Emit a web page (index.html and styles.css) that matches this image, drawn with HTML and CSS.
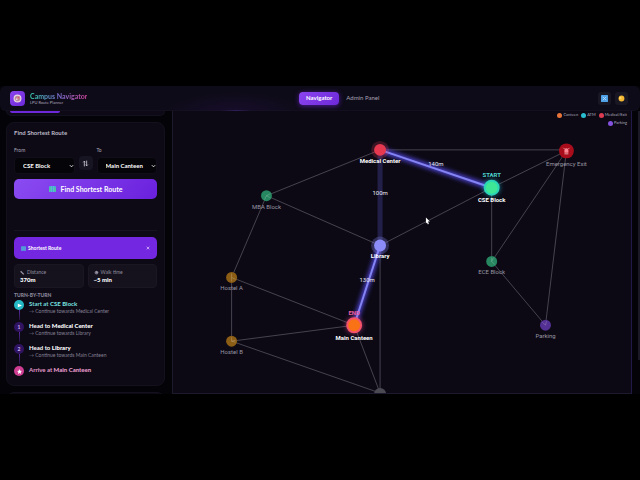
FILE: index.html
```html
<!DOCTYPE html>
<html lang="en">
<head>
  <meta charset="UTF-8">
  <meta name="viewport" content="width=device-width, initial-scale=1.0">
  <title>Campus Navigator</title>
  <link rel="stylesheet" href="styles.css">
</head>
<body>
  <div class="app">
    <header class="topbar">
      <div class="brand">
        <div class="brand-logo">
          <svg viewBox="0 0 16 16" width="9" height="9">
            <circle cx="8" cy="8" r="7" fill="#ead9e4"/>
            <circle cx="8" cy="8" r="5" fill="#b98a9c"/>
            <path d="M12 4 L9 9 L4 12 L7 7 Z" fill="#f5eef5"/>
            <path d="M12 4 L9 9 L7 7 Z" fill="#d5324f"/>
          </svg>
        </div>
        <div>
          <h1>Campus Navigator</h1>
          <p>LPU Route Planner</p>
        </div>
      </div>
      <nav>
        <a href="#navigator" class="active">Navigator</a>
        <a href="#admin">Admin Panel</a>
      </nav>
      <div class="tools">
        <button class="tool-btn" aria-label="Map">
          <svg viewBox="0 0 12 12" width="7" height="7">
            <rect width="12" height="12" rx="1" fill="#4d9fe6"/>
            <path d="M3 3 L9 9 M9 3 L3 9" stroke="#b5dcfb" stroke-width="1.5"/>
          </svg>
        </button>
        <button class="tool-btn" aria-label="Theme">
          <svg viewBox="0 0 12 12" width="7" height="7">
            <circle cx="6" cy="6" r="5" fill="#f5b731"/>
            <circle cx="4" cy="5" r="2" fill="#ffd968"/>
          </svg>
        </button>
      </div>
    </header>

    <main>
      <aside class="sidebar">
        <section class="card card-prev"><div class="prev-bar"></div></section>

        <section class="card route-card">
          <h2>Find Shortest Route</h2>
          <div class="route-form">
            <div class="field">
              <label for="from">From</label>
              <div class="select-wrap">
                <select id="from"><option>CSE Block</option><option>Library</option></select>
                <svg viewBox="0 0 6 4" width="5" height="4"><path d="M1 1 L3 3 L5 1" fill="none" stroke="#fff"/></svg>
              </div>
            </div>
            <button class="swap-btn" aria-label="Swap">
              <svg viewBox="0 0 12 12" width="7" height="7">
                <path d="M4 11 V2 M2 4 L4 2 L6 4 M8 1 V10 M6 8 L8 10 L10 8" fill="none" stroke="#cfcbdc" stroke-width="1.4"/>
              </svg>
            </button>
            <div class="field">
              <label for="to">To</label>
              <div class="select-wrap">
                <select id="to"><option>Main Canteen</option><option>Library</option></select>
                <svg viewBox="0 0 6 4" width="5" height="4"><path d="M1 1 L3 3 L5 1" fill="none" stroke="#fff"/></svg>
              </div>
            </div>
          </div>
          <button class="find-btn">
            <svg class="map-icon" viewBox="0 0 14 12" width="7" height="6">
              <rect width="14" height="12" rx="1" fill="#4aa5d8"/>
              <path d="M0 3 L5 1 V9 L0 12 Z M9 2 L14 4 V12 L9 10 Z" fill="#4cc3a5"/>
              <path d="M5 0 V12 M9 0 V12" stroke="#6fc0e2"/>
            </svg>
            Find Shortest Route
          </button>

          <div class="result">
            <div class="result-head">
              <svg class="map-icon" viewBox="0 0 14 12" width="5" height="5">
                <rect width="14" height="12" rx="1" fill="#4aa5d8"/>
                <path d="M0 3 L5 1 V9 L0 12 Z M9 2 L14 4 V12 L9 10 Z" fill="#5f8fd8"/>
              </svg>
              <span>Shortest Route</span>
              <button class="close-btn" aria-label="Close">
                <svg viewBox="0 0 6 6" width="4" height="4"><path d="M1 1 L5 5 M5 1 L1 5" stroke="#e9dcff"/></svg>
              </button>
            </div>
            <div class="stats">
              <div class="stat">
                <p>
                  <svg viewBox="0 0 8 8" width="5" height="5"><path d="M1 2 L6 7" stroke="#9a96a8" stroke-width="2"/></svg>
                  Distance
                </p>
                <strong>370m</strong>
              </div>
              <div class="stat">
                <p>
                  <svg viewBox="0 0 8 8" width="5" height="5"><circle cx="4" cy="4" r="3" fill="#777284"/><path d="M4 2 V4 H6" fill="none" stroke="#b5b1c2"/></svg>
                  Walk time
                </p>
                <strong>~5 min</strong>
              </div>
            </div>
            <h3>TURN-BY-TURN</h3>
            <ol class="steps">
              <li class="start">
                <span class="dot"><svg viewBox="0 0 6 6" width="5" height="5"><path d="M1 1 L6 3 L1 5 Z" fill="#fff"/></svg></span>
                <div><b>Start at <strong>CSE Block</strong></b><p>→ Continue towards Medical Center</p></div>
              </li>
              <li>
                <span class="dot">1</span>
                <div><b>Head to <strong>Medical Center</strong></b><p>→ Continue towards Library</p></div>
              </li>
              <li>
                <span class="dot">2</span>
                <div><b>Head to <strong>Library</strong></b><p>→ Continue towards Main Canteen</p></div>
              </li>
              <li class="end">
                <span class="dot"><svg viewBox="0 0 10 10" width="5" height="5"><path d="M5 0 L6.500 3.400 L10 3.800 L7.400 6.200 L8.100 10 L5 8 L1.900 10 L2.600 6.200 L0 3.800 L3.500 3.400 Z" fill="#fff"/></svg></span>
                <div><b>Arrive at <strong>Main Canteen</strong></b></div>
              </li>
            </ol>
          </div>
        </section>
        <section class="card card-next"></section>
      </aside>

      <section class="map">
        <ul class="legend">
          <li><i class="canteen"></i>Canteen</li>
          <li><i class="atm"></i>ATM</li>
          <li><i class="medical"></i>Medical/Exit</li>
          <li><i class="parking"></i>Parking</li>
        </ul>
        <svg class="graph" viewBox="172 111 460 283" preserveAspectRatio="xMidYMin slice">
          <defs>
            <filter id="glow" x="-50%" y="-50%" width="200%" height="200%">
              <feGaussianBlur stdDeviation="2"/>
            </filter>
          </defs>

          <!-- campus paths -->
          <g class="edges">
            <path d="M380 150 H567"/>
            <path d="M380 150 L266 196 L380 246 L492 188 L567 151"/>
            <path d="M266 196 L231 278 V342 L354 326 L231 278"/>
            <path d="M231 342 L380 394 L354 326"/>
            <path d="M380 246 V394"/>
            <path d="M492 188 V262 L546 326 L567 151 L492 262"/>
          </g>

          <!-- active route -->
          <path class="done" d="M380 150 V246"/>
          <g class="route-glow" filter="url(#glow)">
            <path d="M492 188 L380 150"/>
            <path d="M380 246 L354 326"/>
          </g>
          <g class="route">
            <path d="M492 188 L380 150"/>
            <path d="M380 246 L354 326"/>
          </g>

          <circle cx="380" cy="150" r="9" fill="#e63950" opacity=".22"/>
          <circle cx="380" cy="246" r="9" fill="#8b8cf8" opacity=".28"/>
          <circle cx="492" cy="188" r="9" fill="#22d3ee" filter="url(#glow)" opacity=".4"/>
          <circle cx="354" cy="326" r="9" fill="#ec4899" filter="url(#glow)" opacity=".4"/>
          <circle cx="380" cy="150" r="6" fill="#e63950"/>
          <circle cx="380" cy="246" r="6" fill="#8b8cf8"/>
          <circle cx="492" cy="188" r="7" fill="#3de795" stroke="#2bd5b7" stroke-width="2"/>
          <circle cx="354" cy="326" r="7" fill="#f97316" stroke="#f4526b" stroke-width="2"/>

          <circle cx="266" cy="196" r="5.500" fill="#268760"/>
          <circle cx="492" cy="262" r="5.500" fill="#268760"/>
          <circle cx="231" cy="278" r="5.500" fill="#8c5d14"/>
          <circle cx="231" cy="342" r="5.500" fill="#8c5d14"/>
          <circle cx="546" cy="326" r="5.500" fill="#533093"/>
          <circle cx="380" cy="395" r="6" fill="#4b4a53"/>
          <circle cx="567" cy="151" r="7.500" fill="#a90d1b"/>
          <g class="node-marks">
            <path d="M266 196 L270 194 M266 196 L270 198 M266 196 L264 200"/>
            <path d="M492 258 V262 L495 265 M492 262 L494 258"/>
            <path d="M231 274 V282 M231 278 L235 280"/>
            <path d="M231 338 V342 L235 343 M231 342 L235 341"/>
            <path d="M543 323 L546 326 L547 322"/>
          </g>
          <path d="M565 153 V150 Q567 147 569 150 V153 Z" fill="#ff8793"/>
          <path d="M565 154 H569 M564 148 L565 149 M570 148 L569 149" stroke="#e8a5ab"/>

          <g class="names">
            <text x="266" y="209">MBA Block</text>
            <text x="231" y="291">Hostel A</text>
            <text x="231" y="355">Hostel B</text>
            <text x="492" y="275">ECE Block</text>
            <text x="546" y="339">Parking</text>
            <text x="567" y="166">Emergency Exit</text>
          </g>
          <g class="names on-route">
            <text x="380" y="163">Medical Center</text>
            <text x="380" y="259">Library</text>
            <text x="492" y="202">CSE Block</text>
            <text x="354" y="341">Main Canteen</text>
          </g>
          <g class="distances">
            <text x="436" y="166">140m</text>
            <text x="380" y="195">100m</text>
            <text x="367" y="283">130m</text>
          </g>
          <text class="tag tag-start" x="492" y="177">START</text>
          <text class="tag tag-end" x="354" y="316">END</text>
          <path d="M426 218 V224 L427 223 L428 225 L429 224 L428 222 H430 Z" fill="#fff"/>
        </svg>
      </section>
      <div class="scrollbar"></div>
    </main>
  </div>
</body>
</html>
```

FILE: styles.css
```css
* { box-sizing: border-box; margin: 0; padding: 0; }

body {
  background: #000;
  color: #fff;
  font-family: Lato, "Liberation Sans", sans-serif;
  font-size: 6px;
  line-height: 8px;
  padding: 86px 0;
}
button, select { font: inherit; color: inherit; border: 0; }
button { display: flex; align-items: center; justify-content: center; cursor: pointer; }
svg { display: block; flex: none; }

.app {
  height: calc(100vh - 172px);
  min-height: 300px;
  display: flex;
  flex-direction: column;
  overflow: hidden;
  background: #040308;
}

/* Header */
.topbar {
  height: 25px;
  flex: none;
  display: flex;
  justify-content: space-between;
  align-items: center;
  padding: 0 12px 0 10px;
  background:
    linear-gradient(90deg, transparent, #3b2378, transparent) 221px 100% / 30px 1px no-repeat,
    radial-gradient(ellipse 70px 20px at 235px 26px, #170d2b, #0e0b18);
  box-shadow: inset 0 -1px #1b172966;
  border-radius: 6px;
}
.brand { display: flex; align-items: center; gap: 5px; }
.brand-logo {
  width: 15px;
  height: 15px;
  border-radius: 4px;
  display: flex;
  align-items: center;
  justify-content: center;
  background: linear-gradient(135deg, #8b45ee, #6d28d9);
}
.brand h1 {
  width: max-content;
  font-size: 7px;
  line-height: 8px;
  font-weight: 700;
  background: linear-gradient(90deg, #34d3b0, #7d72d8 50%, #d1459a);
  -webkit-background-clip: text;
  background-clip: text;
  color: transparent;
}
.brand p { font-size: 4px; line-height: 5px; color: #aaa6b8; }
nav { display: flex; align-items: center; }
nav a {
  padding: 2px 7px 3px;
  border-radius: 4px;
  color: #a5a1b3;
  text-decoration: none;
}
nav a.active {
  color: #fff;
  font-weight: 700;
  background: linear-gradient(135deg, #8b45ee, #6d28d9);
  box-shadow: 0 1px 5px #4c1d95;
}
.tools { display: flex; gap: 4px; justify-content: flex-end; }
.tool-btn { width: 13px; height: 13px; border-radius: 3px; background: #1a1724; }

main { flex: 1; min-height: 0; display: flex; }

/* Sidebar */
.sidebar {
  width: 172px;
  flex: none;
  padding: 0 7px 0 6px;
  display: flex;
  flex-direction: column;
  gap: 6px;
  overflow: hidden;
}
.card {
  flex: none;
  background: #0d0a16;
  border: 1px solid #14111e;
  border-radius: 8px;
  padding: 0 7px;
}
.card-prev { height: 5px; border-top: 0; border-radius: 0 0 8px 8px; }
.prev-bar { width: 50px; height: 2px; background: #6d28d9; border-radius: 0 0 4px 4px; margin-left: -4px; }
.card-next { height: 20px; }
.route-card { height: 264px; padding-top: 6px; }
.route-card h2 { font-size: 6px; line-height: 8px; font-weight: 700; color: #bbb8c6; }

.route-form { display: flex; align-items: flex-end; gap: 4px; margin-top: 10px; }
.field { flex: 1; min-width: 0; }
.field label { display: block; font-size: 5px; line-height: 6px; color: #aaa6b8; margin-bottom: 4px; }
.select-wrap { position: relative; }
.select-wrap select {
  display: block;
  width: 100%;
  height: 17px;
  padding: 0 8px;
  border: 1px solid #110e1a;
  border-radius: 4px;
  background: #050409;
  appearance: none;
  font-weight: 700;
}
.select-wrap svg { position: absolute; right: 1px; top: 7px; pointer-events: none; }
.swap-btn { width: 14px; height: 14px; border-radius: 4px; background: #181522; margin-bottom: 4px; }
.find-btn {
  width: 100%;
  height: 20px;
  margin-top: 5px;
  gap: 5px;
  border-radius: 5px;
  background: linear-gradient(135deg, #8b4cf2, #6a20dc);
  font-size: 7px;
  font-weight: 700;
}

.result { margin-top: 31px; padding-top: 6px; border-top: 1px solid #171421; }
.result-head {
  display: flex;
  align-items: center;
  gap: 2px;
  height: 22px;
  padding: 0 7px;
  border-radius: 5px;
  background: #7427e0;
  font-size: 5px;
  font-weight: 700;
}
.close-btn { margin-left: auto; background: none; }
.stats { display: grid; grid-template-columns: 1fr 1fr; gap: 4px; margin-top: 5px; }
.stat {
  height: 24px;
  padding: 3px 5px;
  border: 1px solid #1a1723;
  border-radius: 4px;
  background: #15121d;
}
.stat p { display: flex; align-items: center; gap: 2px; font-size: 5px; color: #918d9f; }
.stat strong { display: block; font-size: 6px; line-height: 8px; font-weight: 900; }
.route-card h3 { margin-top: 4px; font-size: 5px; line-height: 6px; font-weight: 900; color: #8c889b; }

/* Turn by turn */
.steps { list-style: none; margin-top: 2px; }
.steps li { display: flex; gap: 5px; height: 22px; position: relative; }
.steps li:not(:last-child)::after {
  content: "";
  position: absolute;
  left: 5px;
  top: 10px;
  width: 1px;
  height: 10px;
  background: linear-gradient(#5b2ca5, #251442);
}
.dot {
  width: 10px;
  height: 10px;
  border-radius: 50%;
  display: flex;
  align-items: center;
  justify-content: center;
  background: #301361;
  color: #c9b3f5;
  font-size: 5px;
  font-weight: 700;
}
.steps b { display: block; font-weight: 700; }
.steps strong { font-weight: 900; }
.steps p { font-size: 5px; line-height: 7px; color: #858193; }
.start .dot { background: #25b9c5; }
.start b { color: #72ddd9; }
.end .dot { background: #cf3e93; }
.end b { color: #e59acb; }

/* Map */
.map {
  flex: 1;
  min-width: 0;
  position: relative;
  overflow: hidden;
  background: #0c0915;
  border: 1px solid #1e1a2d;
  border-width: 0 1px 1px;
  border-right-color: #211948;
}
.graph { width: 100%; height: 100%; }
.legend {
  position: absolute;
  top: 0;
  right: 4px;
  width: 80px;
  list-style: none;
  display: flex;
  flex-wrap: wrap;
  justify-content: flex-end;
  column-gap: 3px;
  font-size: 4px;
  line-height: 8px;
  color: #aaa6b8;
}
.legend li { display: flex; align-items: center; gap: 1px; }
.legend i { width: 5px; height: 5px; border-radius: 50%; }
.canteen { background: #e8743a; }
.atm { background: #29bfd0; }
.medical { background: #dc3b51; }
.parking { background: #8452df; }

.edges path { fill: none; stroke: #46434e; stroke-width: 1; }
.done { stroke: #222049; stroke-width: 5; }
.route path { stroke: #8484f4; stroke-width: 2; }
.route-glow path { stroke: #4d43ce; stroke-width: 5; }
.node-marks path { fill: none; stroke: #fff; stroke-opacity: .2; }
.graph text { text-anchor: middle; font-family: Roboto, "Liberation Sans", sans-serif; font-size: 6px; }
.names { fill: #9895a1; }
.on-route { fill: #fff; font-weight: 700; }
.distances { fill: #e8e6f2; }
.graph .tag { font-weight: 700; }
.tag-start { fill: #4ed5d0; }
.tag-end { fill: #ec5fa8; }

.scrollbar { width: 2px; flex: none; margin: 0 0 34px 6px; background: #1b1926; }
```
